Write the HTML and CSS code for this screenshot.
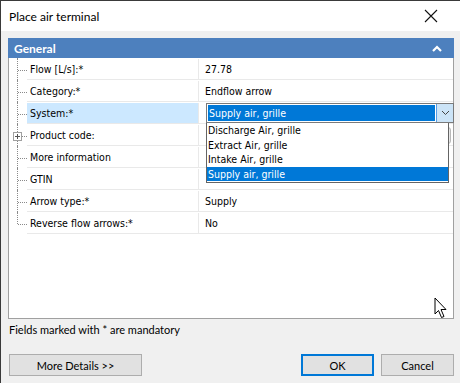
FILE: index.html
```html
<!DOCTYPE html>
<html lang="en">
<head>
    <meta charset="UTF-8">
    <title>Place air terminal</title>
    <link rel="stylesheet" href="styles.css">
</head>
<body>
    <div class="window">
        <div class="titlebar">
            <span class="title">Place air terminal</span>
            <svg class="close" width="14" height="14" viewBox="0 0 14 14">
                <path d="M1 1 L13 13 M13 1 L1 13" stroke="#111" stroke-width="1.1" fill="none"/>
            </svg>
        </div>
        <div class="content">
            <div class="grid">
                <div class="grid-head">
                    <span>General</span>
                    <svg width="10" height="7" viewBox="0 0 10 7">
                        <path d="M1 6 L5 2 L9 6" stroke="#fff" stroke-width="2.2" fill="none"/>
                    </svg>
                </div>
                <div class="row">
                    <div class="tree"></div>
                    <div class="label">Flow [L/s]:*</div>
                    <div class="value">27.78</div>
                </div>
                <div class="row">
                    <div class="tree"></div>
                    <div class="label">Category:*</div>
                    <div class="value">Endflow arrow</div>
                </div>
                <div class="row selected">
                    <div class="tree"></div>
                    <div class="label">System:*</div>
                    <div class="value"></div>
                </div>
                <div class="row">
                    <div class="tree plus"><span class="box"></span></div>
                    <div class="label">Product code:</div>
                    <div class="value"><span class="dots"></span></div>
                </div>
                <div class="row">
                    <div class="tree"></div>
                    <div class="label">More information</div>
                    <div class="value"></div>
                </div>
                <div class="row">
                    <div class="tree"></div>
                    <div class="label">GTIN</div>
                    <div class="value"></div>
                </div>
                <div class="row">
                    <div class="tree"></div>
                    <div class="label">Arrow type:*</div>
                    <div class="value">Supply</div>
                </div>
                <div class="row last">
                    <div class="tree"></div>
                    <div class="label">Reverse flow arrows:*</div>
                    <div class="value">No</div>
                </div>

                <!-- открытый выпадающий список System -->
                <div class="combo">
                    <span class="combo-text">Supply air, grille</span>
                    <span class="combo-btn">
                        <svg width="9" height="6" viewBox="0 0 9 6">
                            <path d="M1 1 L4.5 4.5 L8 1" stroke="#444" stroke-width="1" fill="none"/>
                        </svg>
                    </span>
                </div>
                <ul class="combo-list">
                    <li>Discharge Air, grille</li>
                    <li>Extract Air, grille</li>
                    <li>Intake Air, grille</li>
                    <li class="active">Supply air, grille</li>
                </ul>

                <svg class="cursor" width="14" height="22" viewBox="0 0 14 22">
                    <path d="M1 1 L1 17 L4.5 13.5 L7.5 20.5 L10 19.5 L7 12.5 L12 12.5 Z" fill="#fff" stroke="#000" stroke-width="1" stroke-linejoin="miter"/>
                </svg>
            </div>
            <p class="note">Fields marked with * are mandatory</p>
            <div class="buttons">
                <button class="btn">More Details &gt;&gt;</button>
                <div class="right">
                    <button class="btn btn-ok">OK</button>
                    <button class="btn">Cancel</button>
                </div>
            </div>
        </div>
    </div>
</body>
</html>
```

FILE: styles.css
```css
* {
    margin: 0;
    padding: 0;
    box-sizing: border-box;
}
body {
    background: #f0f0f0;
    font-family: 'Lato', sans-serif;
    font-size: 11px;
    color: #000;
}
.window {
    width: 460px;
    height: 383px;
    background: #f0f0f0;
    border-left: 1px solid #3a3a3a;
    border-top: 1px solid #3a3a3a;
    overflow: hidden;
}
.titlebar {
    height: 30px;
    background: #fff;
    display: flex;
    align-items: center;
    justify-content: space-between;
    padding: 0 22px 0 8px;
}
.title {
    font-size: 12px;
}
.content {
    padding: 7px 6px 0 7px;
}
.grid {
    position: relative;
    height: 281px;
    background: #fff;
    border: 1px solid #a0a0a0;
    border-top: none;
}
.grid-head {
    height: 20px;
    background: #4d80be;
    color: #fff;
    font-size: 12px;
    font-weight: bold;
    display: flex;
    align-items: center;
    justify-content: space-between;
    padding: 0 12px 0 6px;
    margin: 0 -1px;
}
.row {
    display: grid;
    grid-template-columns: 18px 172px 1fr;
    height: 22px;
    font-family: 'DejaVu Sans Condensed', 'DejaVu Sans', sans-serif;
    font-size: 10.5px;
    padding-top: 1px;
}
.row .label, .row .value {
    display: flex;
    align-items: center;
    border-bottom: 1px solid #e9e9e9;
}
.row .label {
    padding-left: 3px;
    border-right: 1px solid #e9e9e9;
}
.row .value {
    padding-left: 6px;
    position: relative;
}
.row.selected .label {
    background: #cce8ff;
}
.tree {
    position: relative;
}
.tree::before {
    content: "";
    position: absolute;
    left: 8px;
    top: -1px;
    bottom: 0;
    border-left: 1px dotted #8a8a8a;
}
.tree::after {
    content: "";
    position: absolute;
    left: 9px;
    right: 0;
    top: 11px;
    border-top: 1px dotted #8a8a8a;
}
.row.last .tree::before {
    bottom: 10px;
}
.tree.plus .box {
    position: absolute;
    left: 4px;
    top: 7px;
    width: 9px;
    height: 9px;
    border: 1px solid #a0a0a0;
    background: #fff;
    z-index: 1;
}
.tree.plus .box::before {
    content: "";
    position: absolute;
    left: 1px;
    right: 1px;
    top: 3px;
    border-top: 1px solid #555;
}
.tree.plus .box::after {
    content: "";
    position: absolute;
    top: 1px;
    bottom: 1px;
    left: 3px;
    border-left: 1px solid #555;
}
.dots {
    position: absolute;
    right: 2px;
    top: 2px;
    width: 16px;
    height: 17px;
    border: 1px solid #b8b8b8;
    border-radius: 3px;
    background: #e8e8e8;
}
.combo {
    position: absolute;
    left: 197px;
    top: 65px;
    width: 248px;
    height: 20px;
    border: 1px solid #7a7a7a;
    background: #fff;
    display: flex;
    font-family: 'DejaVu Sans Condensed', 'DejaVu Sans', sans-serif;
    font-size: 10.5px;
}
.combo-text {
    flex: 1;
    margin: 1px;
    background: #0078d7;
    color: #fff;
    display: flex;
    align-items: center;
    padding-left: 1px;
}
.combo-btn {
    width: 17px;
    background: #cce4f7;
    border-left: 1px solid #569de5;
    display: flex;
    align-items: center;
    justify-content: center;
}
.combo-list {
    position: absolute;
    left: 197px;
    top: 85px;
    width: 243px;
    list-style: none;
    background: #fff;
    border: 1px solid #646464;
    border-top: none;
    font-family: 'DejaVu Sans Condensed', 'DejaVu Sans', sans-serif;
    font-size: 10.5px;
    padding-bottom: 1px;
}
.combo-list li {
    height: 14.5px;
    line-height: 14.5px;
    padding-left: 1px;
}
.combo-list li.active {
    background: #0078d7;
    color: #fff;
}
.cursor {
    position: absolute;
    left: 425px;
    top: 259px;
}
.note {
    margin-top: 1px;
    padding-left: 1px;
    height: 20px;
    line-height: 20px;
}
.buttons {
    display: flex;
    justify-content: space-between;
    margin-top: 14px;
    padding-left: 1px;
}
.right {
    display: flex;
    gap: 7px;
}
.btn {
    height: 22px;
    width: 73px;
    background: #e1e1e1;
    border: 1px solid #adadad;
    font-family: 'Lato', sans-serif;
    font-size: 11px;
    color: #000;
}
.buttons > .btn {
    width: 133px;
}
.btn-ok {
    border: 2px solid #0078d7;
}
```
